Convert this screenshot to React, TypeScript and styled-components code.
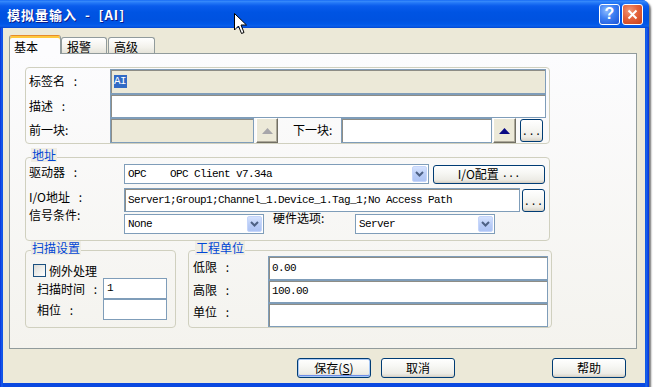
import React from "react";
import styled, { createGlobalStyle } from "styled-components";

const CJK = `"Noto Sans CJK SC", "Liberation Sans", sans-serif`;
const MONO = `"Liberation Mono", "Noto Sans CJK SC", monospace`;

const GlobalStyle = createGlobalStyle`
  html, body { margin: 0; padding: 0; background: #ffffff; }
  body { font-family: ${CJK}; font-size: 12px; color: #000; }
  * { box-sizing: border-box; }
`;

const Window = styled.div`
  position: relative;
  width: 649px;
  height: 387px;
  display: flex;
  flex-direction: column;
  background: linear-gradient(to right, #0831D9 0px, #1660EE 2px, #0A48E0 3px, #0A48E0 645px, #166AEE 646px, #0831D9 649px);
  border-top-right-radius: 7px;
  box-shadow: 2px 2px 2px rgba(0, 0, 0, 0.55);
`;

const TitleBar = styled.div`
  height: 28px;
  flex: none;
  display: flex;
  align-items: center;
  padding: 0 6px 0 7px;
  border-top-right-radius: 7px;
  background: linear-gradient(
    to bottom,
    #0A5DF2 0px,
    #3A8DFB 1px,
    #2276F6 3px,
    #0A5CEC 6px,
    #0054E3 12px,
    #0052E0 20px,
    #0057E8 24px,
    #0B5FEB 26px,
    #0046D1 28px
  );
`;

const TitleText = styled.span`
  flex: 1;
  color: #ffffff;
  font-family: ${CJK};
  font-weight: 700;
  font-size: 13px;
  letter-spacing: 1px;
  white-space: pre;
  text-shadow: 1px 1px 0 #0A1C8C;
  padding-top: 1px;
`;

const CaptionButton = styled.div<{ $kind: "help" | "close" }>`
  width: 21px;
  height: 21px;
  margin-left: 2px;
  border: 1px solid #ffffff;
  border-radius: 3px;
  display: flex;
  align-items: center;
  justify-content: center;
  background: ${(p) =>
    p.$kind === "close"
      ? "radial-gradient(circle at 35% 30%, #F29878 0%, #E4623B 45%, #C8411A 100%)"
      : "radial-gradient(circle at 35% 30%, #8DBBFF 0%, #3D7FF2 45%, #1C52D6 100%)"};
`;

const HelpGlyph = styled.span`
  color: #ffffff;
  font-family: "Liberation Sans", sans-serif;
  font-weight: 700;
  font-size: 16px;
  line-height: 16px;
`;

const Cursor = styled.svg`
  position: absolute;
  left: 234px;
  top: 13px;
`;

const Client = styled.div`
  flex: 1;
  margin: 0 4px 4px 3px;
  background: #ECE9D8;
  display: flex;
  flex-direction: column;
  padding: 7px 8px 0 6px;
`;

const TabStrip = styled.div`
  display: flex;
  align-items: flex-end;
  height: 18px;
  position: relative;
  z-index: 1;
`;

const Tab = styled.div<{ $active?: boolean; $w: number; $ml?: number }>`
  width: ${(p) => p.$w}px;
  height: ${(p) => (p.$active ? 19 : 16)}px;
  margin-bottom: ${(p) => (p.$active ? -1 : 0)}px;
  margin-left: ${(p) => p.$ml ?? 0}px;
  border: 1px solid #919B9C;
  border-bottom: none;
  border-top-color: ${(p) => (p.$active ? "#E68B2C" : "#919B9C")};
  border-radius: 3px 3px 0 0;
  background: ${(p) =>
    p.$active ? "#FCFCFE" : "linear-gradient(to bottom, #FFFFFF, #F3F2EC 60%, #E5E3DA)"};
  box-shadow: ${(p) => (p.$active ? "inset 0 2px 0 #FFC83C" : "none")};
  font-family: ${CJK};
  font-size: 12px;
  line-height: 14px;
  padding: ${(p) => (p.$active ? "4px 0 0 4px" : "2px 0 0 5px")};
  white-space: nowrap;
`;

const Panel = styled.div`
  width: 628px;
  height: 296px;
  flex: none;
  border: 1px solid #919B9C;
  background: linear-gradient(to bottom, #FCFCFE, #F4F3EE);
  padding: 13px 0 0 15px;
  display: flex;
  flex-direction: column;
`;

const Group = styled.div<{ $w: number; $h: number; $pad: string; $mt?: number; $ml?: number }>`
  position: relative;
  flex: none;
  width: ${(p) => p.$w}px;
  height: ${(p) => p.$h}px;
  margin-top: ${(p) => p.$mt ?? 0}px;
  margin-left: ${(p) => p.$ml ?? 0}px;
  padding: ${(p) => p.$pad};
  border: 1px solid #D0D0BF;
  border-radius: 4px;
  display: flex;
  flex-direction: column;
`;

const Legend = styled.span<{ $left: number }>`
  position: absolute;
  top: -10px;
  left: ${(p) => p.$left}px;
  padding: 0 1px;
  background: #EFEDE4;
  color: #0046D5;
  font-family: ${CJK};
  font-size: 12px;
  line-height: 14px;
  white-space: nowrap;
`;

const BottomRow = styled.div`
  display: flex;
  margin-top: 9px;
`;

const Row = styled.div<{ $h: number; $mt?: number; $pl?: number }>`
  display: flex;
  align-items: center;
  height: ${(p) => p.$h}px;
  margin-top: ${(p) => p.$mt ?? 0}px;
  padding-left: ${(p) => p.$pl ?? 0}px;
`;

const Label = styled.span<{ $w: number; $lift?: number; $ml?: number }>`
  flex: none;
  width: ${(p) => p.$w}px;
  margin-left: ${(p) => p.$ml ?? 0}px;
  margin-bottom: ${(p) => (p.$lift ?? 0) * 2}px;
  font-family: ${CJK};
  font-size: 12px;
  line-height: 14px;
  white-space: pre;
`;

const Field = styled.div<{ $w: number; $h: number; $disabled?: boolean; $sunken?: boolean }>`
  flex: none;
  width: ${(p) => p.$w}px;
  height: ${(p) => p.$h}px;
  border: 1px solid #7F9DB9;
  background: ${(p) => (p.$disabled ? "#ECE9D8" : "#FFFFFF")};
  box-shadow: ${(p) => (p.$sunken ? "inset 1px 1px 0 #8E8D86" : "none")};
  display: flex;
  align-items: center;
  padding: 0 0 1px 3px;
  font-family: ${MONO};
  font-size: 11px;
  letter-spacing: -0.6px;
  white-space: pre;
  overflow: hidden;
`;

const Selected = styled.span`
  background: #316AC5;
  color: #ffffff;
  padding: 0 1px 0 0;
  line-height: 13px;
`;

const Select = styled.div<{ $w: number; $h: number }>`
  flex: none;
  width: ${(p) => p.$w}px;
  height: ${(p) => p.$h}px;
  border: 1px solid #7F9DB9;
  background: #FFFFFF;
  display: flex;
  align-items: center;
  padding: 1px 1px 1px 3px;
  font-family: ${MONO};
  font-size: 11px;
  letter-spacing: -0.6px;
`;

const SelectText = styled.span`
  flex: 1;
  white-space: pre;
`;

const DropButton = styled.div`
  width: 15px;
  align-self: stretch;
  border: 1px solid #C5D5FA;
  border-radius: 2px;
  background: linear-gradient(to bottom, #D5E2FE, #B7CBF6 60%, #AEC4F5);
  display: flex;
  align-items: center;
  justify-content: center;
`;

const SpinButton = styled.div<{ $w: number; $h: number; $ml?: number }>`
  flex: none;
  width: ${(p) => p.$w}px;
  height: ${(p) => p.$h}px;
  margin-left: ${(p) => p.$ml ?? 0}px;
  background: #ECE9D8;
  border-top: 1px solid #FFFFFF;
  border-left: 1px solid #FFFFFF;
  border-right: 1px solid #716F64;
  border-bottom: 1px solid #716F64;
  box-shadow: inset -1px -1px 0 #ACA899;
  display: flex;
  align-items: center;
  justify-content: center;
`;

const XPButton = styled.div<{ $w: number; $h: number; $ml?: number; $default?: boolean }>`
  flex: none;
  width: ${(p) => p.$w}px;
  height: ${(p) => p.$h}px;
  margin-left: ${(p) => p.$ml ?? 0}px;
  border: 1px solid #003C74;
  border-radius: 3px;
  background: linear-gradient(to bottom, #FFFFFF 0%, #F7F7F4 40%, #EDECE6 80%, #D8D3C7 100%);
  box-shadow: ${(p) =>
    p.$default ? "inset 0 0 0 1px #A8C8F5, inset 0 -1px 0 1px #6D8DE8" : "inset 0 -1px 0 #D6D0C5"};
  display: flex;
  align-items: center;
  justify-content: center;
  font-family: ${CJK};
  font-size: 12px;
  line-height: 14px;
  white-space: pre;
`;

const Dots = styled.span`
  font-family: ${MONO};
  font-size: 11px;
  letter-spacing: 0px;
  padding-top: 3px;
`;

const MonoText = styled.span`
  font-family: ${MONO};
  font-size: 11px;
  letter-spacing: -0.4px;
`;

const Checkbox = styled.div`
  flex: none;
  width: 13px;
  height: 13px;
  border: 1px solid #1C5180;
  background: linear-gradient(135deg, #DCDCD7, #FFFFFF);
`;

const CheckLabel = styled.span`
  margin-left: 3px;
  font-family: ${CJK};
  font-size: 12px;
  line-height: 14px;
`;

const Footer = styled.div`
  display: flex;
  margin-top: 9px;
  padding-left: 288px;
`;

const Chevron = () => (
  <svg width="9" height="6" viewBox="0 0 9 6">
    <polyline points="1,1 4.5,4.5 8,1" fill="none" stroke="#4D6185" strokeWidth="2" />
  </svg>
);

const UpTriangle = ({ color }: { color: string }) => (
  <svg width="11" height="6" viewBox="0 0 11 6">
    <polygon points="0,6 5.5,0 11,6" fill={color} />
  </svg>
);

const Combo = ({ w, h, text }: { w: number; h: number; text: string }) => (
  <Select $w={w} $h={h}>
    <SelectText>{text}</SelectText>
    <DropButton>
      <Chevron />
    </DropButton>
  </Select>
);

const SP = "\u2002 ";

export default function App() {
  return (
    <>
      <GlobalStyle />
      <Window>
        <TitleBar>
          <TitleText>模拟量输入  -  [AI]</TitleText>
          <CaptionButton $kind="help">
            <HelpGlyph>?</HelpGlyph>
          </CaptionButton>
          <CaptionButton $kind="close">
            <svg width="11" height="11" viewBox="0 0 11 11">
              <path d="M1.5 1.5 L9.5 9.5 M9.5 1.5 L1.5 9.5" stroke="#ffffff" strokeWidth="2" />
            </svg>
          </CaptionButton>
        </TitleBar>
        <Cursor width="13" height="22" viewBox="0 0 13 22">
          <path
            d="M0.5 0.5 L0.5 17 L4.5 13 L7.5 20.5 L10 19.5 L7 12 L12.5 12 Z"
            fill="#ffffff"
            stroke="#000000"
            strokeWidth="1"
          />
        </Cursor>
        <Client>
          <TabStrip>
            <Tab $active $w={52}>基本</Tab>
            <Tab $w={46}>报警</Tab>
            <Tab $w={47} $ml={1}>高级</Tab>
          </TabStrip>
          <Panel>
            <Group $w={525} $h={77} $pad="1px 0 0 3px">
              <Row $h={25}>
                <Label $w={81} $lift={1}>{`标签名${SP}:`}</Label>
                <Field $w={436} $h={25} $disabled $sunken>
                  <Selected>AI</Selected>
                </Field>
              </Row>
              <Row $h={24}>
                <Label $w={81}>{`描述${SP}:`}</Label>
                <Field $w={436} $h={24} $sunken />
              </Row>
              <Row $h={25}>
                <Label $w={81} $lift={1}>前一块:</Label>
                <Field $w={144} $h={25} $disabled $sunken />
                <SpinButton $w={22} $h={25} $ml={2}>
                  <UpTriangle color="#A7A6AA" />
                </SpinButton>
                <Label $w={48} $ml={15} $lift={1}>下一块:</Label>
                <Field $w={151} $h={25} $sunken />
                <SpinButton $w={23} $h={25} $ml={1}>
                  <UpTriangle color="#0A0A84" />
                </SpinButton>
                <XPButton $w={23} $h={23} $ml={4}>
                  <Dots>...</Dots>
                </XPButton>
              </Row>
            </Group>

            <Group $w={525} $h={84} $mt={13} $pad="6px 0 0 3px">
              <Legend $left={5}>地址</Legend>
              <Row $h={20}>
                <Label $w={95} $lift={2}>{`驱动器${SP}:`}</Label>
                <Combo w={305} h={20} text="OPC    OPC Client v7.34a" />
                <XPButton $w={112} $h={19} $ml={4}>
                  I/O配置 <MonoText>...</MonoText>
                </XPButton>
              </Row>
              <Row $h={24} $mt={4}>
                <Label $w={95} $lift={3}>{`I/O地址${SP}:`}</Label>
                <Field $w={396} $h={24} $sunken>
                  Server1;Group1;Channel_1.Device_1.Tag_1;No Access Path
                </Field>
                <XPButton $w={23} $h={23} $ml={2}>
                  <Dots>...</Dots>
                </XPButton>
              </Row>
              <Row $h={20} $mt={2}>
                <Label $w={95} $lift={9}>信号条件:</Label>
                <Combo w={140} h={20} text="None" />
                <Label $w={82} $ml={9} $lift={6}>硬件选项:</Label>
                <Combo w={140} h={20} text="Server" />
              </Row>
            </Group>

            <BottomRow>
              <Group $w={151} $h={78} $pad="13px 0 0 7px">
                <Legend $left={5}>扫描设置</Legend>
                <Row $h={13}>
                  <Checkbox />
                  <CheckLabel>例外处理</CheckLabel>
                </Row>
                <Row $h={21} $mt={1} $pl={4}>
                  <Label $w={66}>{`扫描时间${SP}:`}</Label>
                  <Field $w={64} $h={21}>1</Field>
                </Row>
                <Row $h={21} $pl={4}>
                  <Label $w={66}>{`相位${SP}:`}</Label>
                  <Field $w={64} $h={21} />
                </Row>
              </Group>

              <Group $w={364} $h={78} $ml={12} $pad="5px 0 0 4px">
                <Legend $left={6}>工程单位</Legend>
                <Row $h={24}>
                  <Label $w={75} $lift={1}>{`低限${SP}:`}</Label>
                  <Field $w={280} $h={24} $sunken>0.00</Field>
                </Row>
                <Row $h={23}>
                  <Label $w={75} $lift={2}>{`高限${SP}:`}</Label>
                  <Field $w={280} $h={23} $sunken>100.00</Field>
                </Row>
                <Row $h={24}>
                  <Label $w={75} $lift={3}>{`单位${SP}:`}</Label>
                  <Field $w={280} $h={24} $sunken />
                </Row>
              </Group>
            </BottomRow>
          </Panel>
          <Footer>
            <XPButton $w={74} $h={20} $default>
              保存(<u>S</u>)
            </XPButton>
            <XPButton $w={74} $h={20} $ml={10}>取消</XPButton>
            <XPButton $w={74} $h={20} $ml={97}>帮助</XPButton>
          </Footer>
        </Client>
      </Window>
    </>
  );
}
